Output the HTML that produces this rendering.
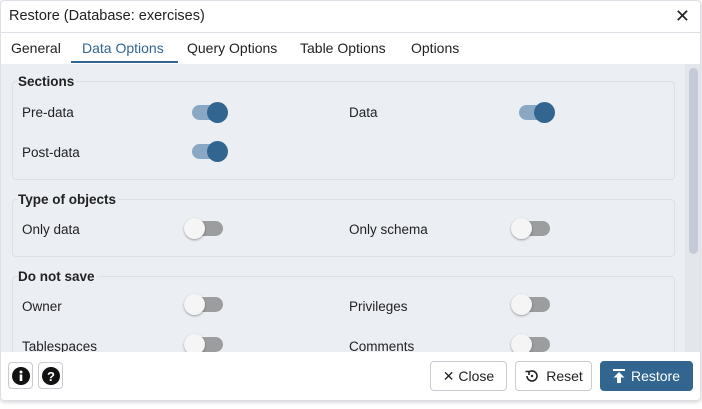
<!DOCTYPE html>
<html><head><style>
*{box-sizing:border-box;margin:0;padding:0}
body{width:702px;height:409px;background:#fff;font-family:"Liberation Sans",sans-serif;color:#222;position:relative;overflow:hidden}
.dlg{position:absolute;left:0;top:0;width:701px;height:401px;background:#fff;border:1px solid #dde0e6;border-radius:4px;box-shadow:0 1px 4px rgba(0,0,0,.2);overflow:hidden}
.title{position:absolute;left:8px;top:7px;font-size:14.5px;color:#222}
.x{position:absolute;right:10px;top:5px;font-size:18px}
.tabs{position:absolute;left:0;top:31px;width:100%;height:33px;border-top:1px solid #dde0e6;border-bottom:1px solid #dde0e6}
.tab{position:absolute;top:7px;font-size:14px;color:#222}
.ul{position:absolute;left:70px;top:28px;width:107px;height:2px;background:#326690}
.content{position:absolute;left:0;top:63px;width:100%;height:288px;background:#ebeef3;overflow:hidden}
.fs{position:absolute;left:11px;width:663px;border:1px solid #dde0e6;border-radius:4px}
.lg{position:absolute;left:17px;font-size:13.5px;font-weight:bold;color:#222;background:#ebeef3;padding-right:2px}
.lb{position:absolute;font-size:13.5px;color:#222}
.tg{position:absolute;width:30px;height:15px;border-radius:8px}
.tg.on{background:#8aa8c3}.tg.off{background:#9c9d9f}
.tg i{position:absolute;top:-3px;width:21px;height:21px;border-radius:50%}
.tg.on i{right:-6px;background:#326690}
.tg.off i{left:-9px;background:#f5f5f5;box-shadow:0 1px 2px rgba(0,0,0,.35)}
.sb{position:absolute;left:684px;top:0;width:15px;height:288px;background:#e3e6eb}
.sb i{position:absolute;left:4px;top:4px;width:9px;height:186px;border-radius:5px;background:#c5cbd6}
.btn{position:absolute;top:361px;height:30px;border:1px solid #c8ccd2;border-radius:4px;background:#fff;font-size:14px;color:#222;display:flex;align-items:center;justify-content:center;gap:6px}
</style></head><body>
<div class="dlg">
<div class="title">Restore (Database: exercises)</div>
<div class="x">✕</div>
<div class="tabs">
<span class="tab" style="left:10px">General</span>
<span class="tab" style="left:81px;color:#326690">Data Options</span>
<span class="tab" style="left:186px">Query Options</span>
<span class="tab" style="left:299px">Table Options</span>
<span class="tab" style="left:410px">Options</span>
<div class="ul"></div>
</div>
<div class="content">
<div class="fs" style="top:17px;height:99px"></div>
<div class="lg" style="top:10px">Sections</div>
<div class="lb" style="left:21px;top:41px">Pre-data</div>
<div class="tg on" style="left:191px;top:41px"><i></i></div>
<div class="lb" style="left:348px;top:41px">Data</div>
<div class="tg on" style="left:518px;top:41px"><i></i></div>
<div class="lb" style="left:21px;top:81px">Post-data</div>
<div class="tg on" style="left:191px;top:80px"><i></i></div>
<div class="fs" style="top:135px;height:58px"></div>
<div class="lg" style="top:128px">Type of objects</div>
<div class="lb" style="left:21px;top:158px">Only data</div>
<div class="tg off" style="left:192px;top:157px"><i></i></div>
<div class="lb" style="left:348px;top:158px">Only schema</div>
<div class="tg off" style="left:519px;top:157px"><i></i></div>
<div class="fs" style="top:212px;height:100px"></div>
<div class="lg" style="top:205px">Do not save</div>
<div class="lb" style="left:21px;top:235px">Owner</div>
<div class="tg off" style="left:192px;top:233px"><i></i></div>
<div class="lb" style="left:348px;top:235px">Privileges</div>
<div class="tg off" style="left:519px;top:233px"><i></i></div>
<div class="lb" style="left:21px;top:275px">Tablespaces</div>
<div class="tg off" style="left:192px;top:273px"><i></i></div>
<div class="lb" style="left:348px;top:275px">Comments</div>
<div class="tg off" style="left:519px;top:273px"><i></i></div>
<div class="sb"><i></i></div>
</div>
</div>
<div class="btn" style="left:8px;width:25px;height:27px;top:362px"><svg width="18" height="18"><circle cx="9" cy="9" r="9" fill="#111"/><rect x="7.7" y="7.5" width="2.6" height="6.5" fill="#fff"/><circle cx="9" cy="5" r="1.5" fill="#fff"/></svg></div>
<div class="btn" style="left:38px;width:25px;height:27px;top:362px"><svg width="18" height="18"><circle cx="9" cy="9" r="9" fill="#111"/><text x="9" y="14" font-size="13" font-weight="bold" text-anchor="middle" fill="#fff" font-family="Liberation Sans">?</text></svg></div>
<div class="btn" style="left:430px;width:77px">✕ Close</div>
<div class="btn" style="left:515px;width:77px"><svg width="16" height="16" viewBox="0 0 16 16"><path d="M3 8a5 5 0 1 0 1.6-3.7" fill="none" stroke="#222" stroke-width="1.6"/><path d="M1.5 3.5h3.5v3.5" fill="none" stroke="#222" stroke-width="1.6"/><circle cx="8" cy="8" r="1.2" fill="#222"/></svg>Reset</div>
<div class="btn" style="left:600px;width:93px;background:#326690;border-color:#326690;color:#fff"><svg width="12" height="14" viewBox="0 0 12 14"><rect x="0" y="0" width="12" height="2" fill="#fff"/><path d="M6 3 L11.5 8.5 H8 V14 H4 V8.5 H0.5Z" fill="#fff"/></svg>Restore</div>
</body></html>
